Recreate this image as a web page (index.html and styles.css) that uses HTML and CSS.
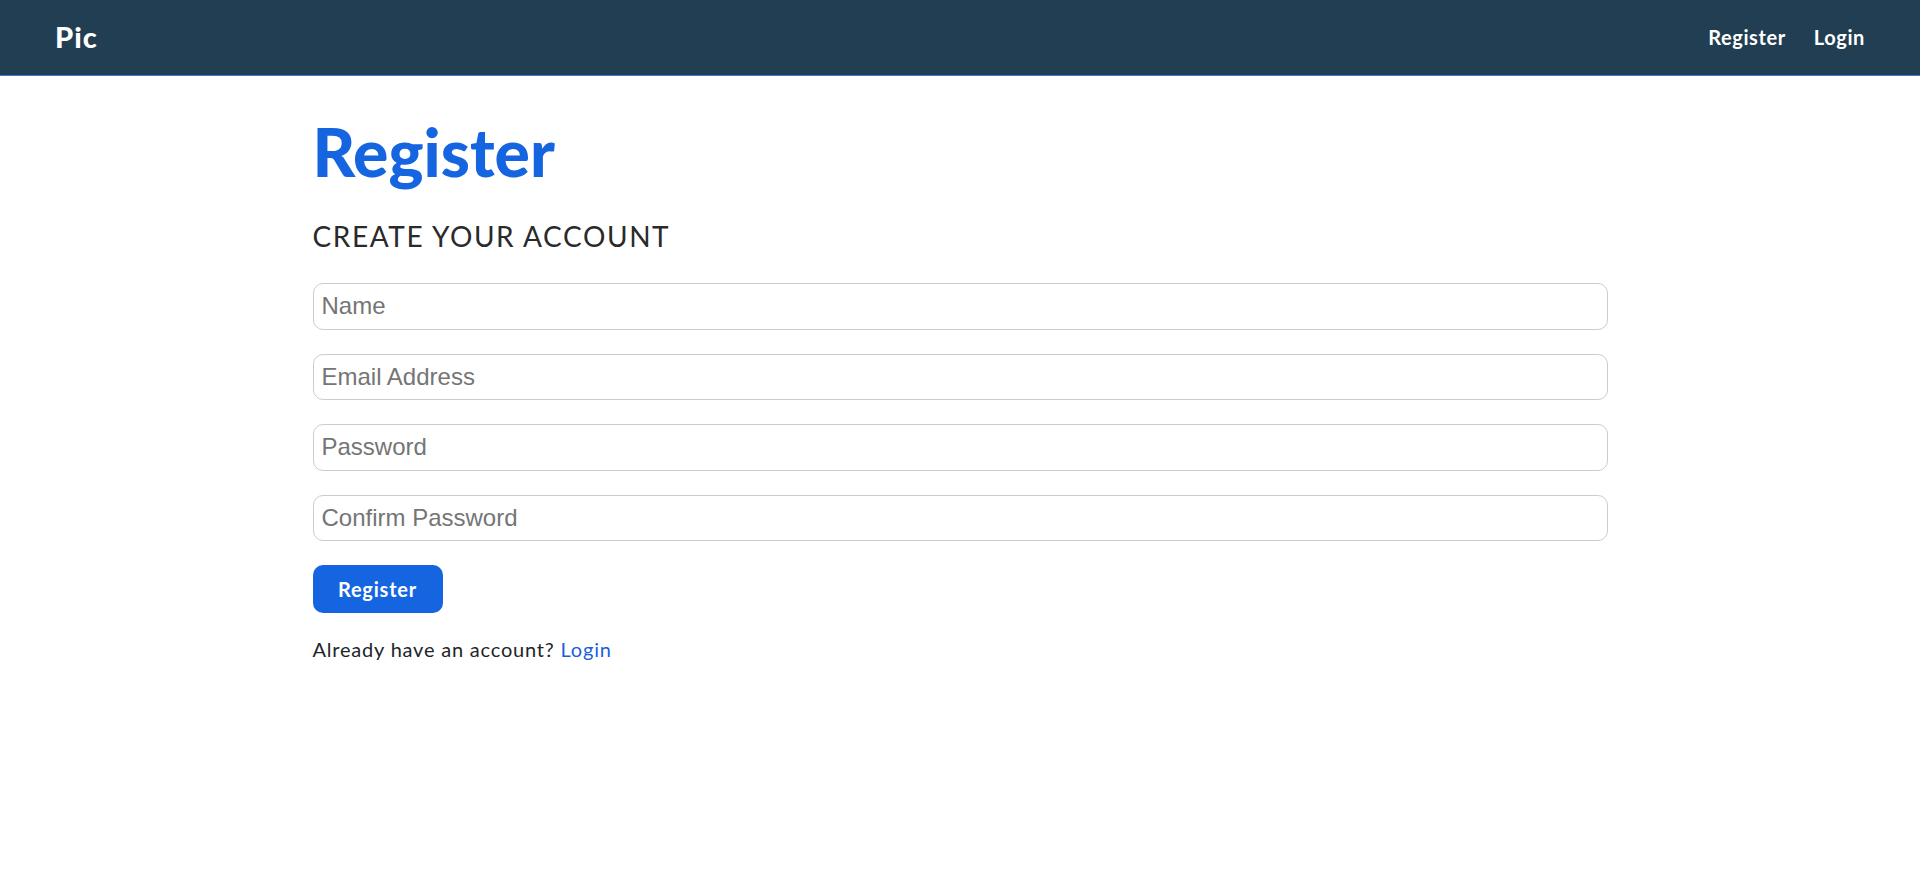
FILE: index.html
```html
<!DOCTYPE html>
<html lang="en">
<head>
<meta charset="utf-8">
<title>Register</title>
<link rel="stylesheet" href="styles.css">
</head>
<body>
<header class="navbar">
  <a class="brand" href="#">Pic</a>
  <nav class="nav-links">
    <a href="#">Register</a>
    <a href="#">Login</a>
  </nav>
</header>
<main class="container">
  <h1 class="title">Register</h1>
  <h2 class="subtitle">CREATE YOUR ACCOUNT</h2>
  <form class="form">
    <input class="field" type="text" placeholder="Name">
    <input class="field" type="email" placeholder="Email Address">
    <input class="field" type="password" placeholder="Password">
    <input class="field" type="password" placeholder="Confirm Password">
    <button class="btn" type="button">Register</button>
  </form>
  <p class="alt">Already have an account? <a href="#">Login</a></p>
</main>
</body>
</html>
```
FILE: styles.css
```css
* { box-sizing: border-box; }
body {
  margin: 0;
  font-family: Lato, "Open Sans", sans-serif;
  color: #212529;
  background: #fff;
}
a { text-decoration: none; }
.navbar {
  height: 76px;
  background: #213e53;
  border-bottom: 1px solid #3a7bd5;
  display: flex;
  align-items: center;
  justify-content: space-between;
  padding: 0 55px 2px 55px;
}
.brand {
  color: #fff;
  font-weight: 900;
  font-size: 29px;
  letter-spacing: 1px;
}
.nav-links {
  display: flex;
  gap: 28px;
}
.nav-links a {
  color: #fff;
  font-size: 20px;
  font-weight: 700;
  letter-spacing: 0.6px;
}
.container {
  width: 1295px;
  margin: 0 auto;
  padding-top: 40px;
}
.title {
  margin: 0;
  font-size: 66px;
  font-weight: 900;
  color: #1565e0;
  line-height: 1.1;
}
.subtitle {
  margin: 31px 0 30px;
  font-size: 28px;
  font-weight: 400;
  color: #2a2a2a;
  line-height: 1.2;
  letter-spacing: 1.6px;
}
.form {
  display: flex;
  flex-direction: column;
  align-items: flex-start;
  gap: 24px;
}
.field {
  width: 100%;
  height: 46.5px;
  border: 1px solid #cccccc;
  border-radius: 10px;
  padding: 0 8px;
  font-family: "Liberation Sans", Arial, sans-serif;
  font-size: 24px;
  color: #333;
  outline: none;
}
.field::placeholder { color: #757575; }
.btn {
  height: 48px;
  width: 130px;
  background: #1565e0;
  color: #fff;
  border: none;
  border-radius: 10px;
  font-family: Lato, "Open Sans", sans-serif;
  font-size: 20px;
  font-weight: 700;
  letter-spacing: 0.8px;
}
.alt {
  margin: 24px 0 0;
  font-size: 20px;
  color: #212529;
  letter-spacing: 0.8px;
}
.alt a { color: #1a5fe0; }
```
